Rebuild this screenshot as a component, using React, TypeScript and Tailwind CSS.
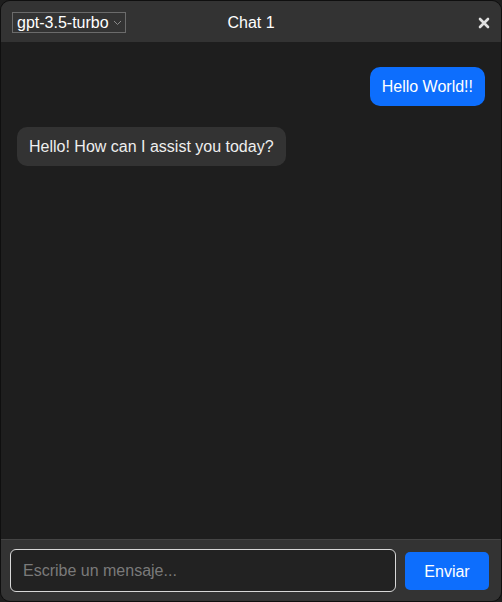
import React, { useState } from "react";

interface Message {
  role: "user" | "assistant";
  text: string;
}

const initialMessages: Message[] = [
  { role: "user", text: "Hello World!!" },
  { role: "assistant", text: "Hello! How can I assist you today?" },
];

export default function App() {
  const [messages] = useState<Message[]>(initialMessages);
  const [draft, setDraft] = useState("");

  return (
    <div
      className="h-[602px] w-[502px] bg-[#1e1e1e]"
      style={{ fontFamily: '"Liberation Sans", Arial, sans-serif' }}
    >
      <div className="flex h-full flex-col overflow-hidden rounded-[10px] border border-[#0f0f0f] bg-[#1e1e1e]">
        {/* HEADER */}
        <div className="relative flex h-[41px] shrink-0 items-center bg-[#333333] pl-[11px] pr-[9px] pt-[2px]">
          <div className="relative flex h-[21px] items-center border border-[#6b6b6b] pl-[4px] pr-[16px]">
            <select
              defaultValue="gpt-3.5-turbo"
              className="appearance-none bg-transparent text-[16px] leading-[19px] text-white outline-none"
            >
              <option className="bg-[#333]">gpt-3.5-turbo</option>
              <option className="bg-[#333]">gpt-4</option>
            </select>
            <svg
              className="pointer-events-none absolute right-[3px] top-[7px] h-[6px] w-[9px]"
              viewBox="0 0 9 6"
              fill="none"
              stroke="#8a8a8a"
              strokeWidth="1"
            >
              <path d="M1 1l3.5 3.5L8 1" />
            </svg>
          </div>
          <span className="absolute left-1/2 -translate-x-1/2 text-[16px] text-white">
            Chat 1
          </span>
          <button className="ml-auto flex h-[20px] w-[16px] items-center justify-center">
            <svg viewBox="0 0 12 12" className="h-[12px] w-[12px]" stroke="#e0e0e0" strokeWidth="2.6" strokeLinecap="round">
              <path d="M2 2l8 8M10 2l-8 8" />
            </svg>
          </button>
        </div>

        {/* MENSAJES */}
        <div className="flex flex-1 flex-col gap-[21px] overflow-y-auto px-[16px] pt-[25px]">
          {messages.map((m, i) => (
            <div
              key={i}
              className={
                m.role === "user"
                  ? "self-end rounded-[10px] bg-[#0d6efd] px-[12px] py-[10px] text-[16px] leading-[19px] text-white"
                  : "self-start rounded-[10px] bg-[#333333] px-[12px] py-[10px] text-[16px] leading-[19px] text-[#eeeeee]"
              }
            >
              {m.text}
            </div>
          ))}
        </div>

        {/* INPUT */}
        <div className="flex shrink-0 items-center gap-[9px] border-t border-[#444444] bg-[#333333] pb-[9px] pl-[9px] pr-[12px] pt-[9px]">
          <input
            value={draft}
            onChange={(e) => setDraft(e.target.value)}
            placeholder="Escribe un mensaje..."
            className="h-[43px] flex-1 rounded-[6px] border border-[#d8d8d8] bg-[#222222] px-[12px] text-[16px] text-white outline-none placeholder:text-[#7a7a7a]"
          />
          <button className="h-[38px] w-[84px] rounded-[5px] bg-[#0d6efd] pt-[2px] text-[16px] text-white">
            Enviar
          </button>
        </div>
      </div>
    </div>
  );
}
